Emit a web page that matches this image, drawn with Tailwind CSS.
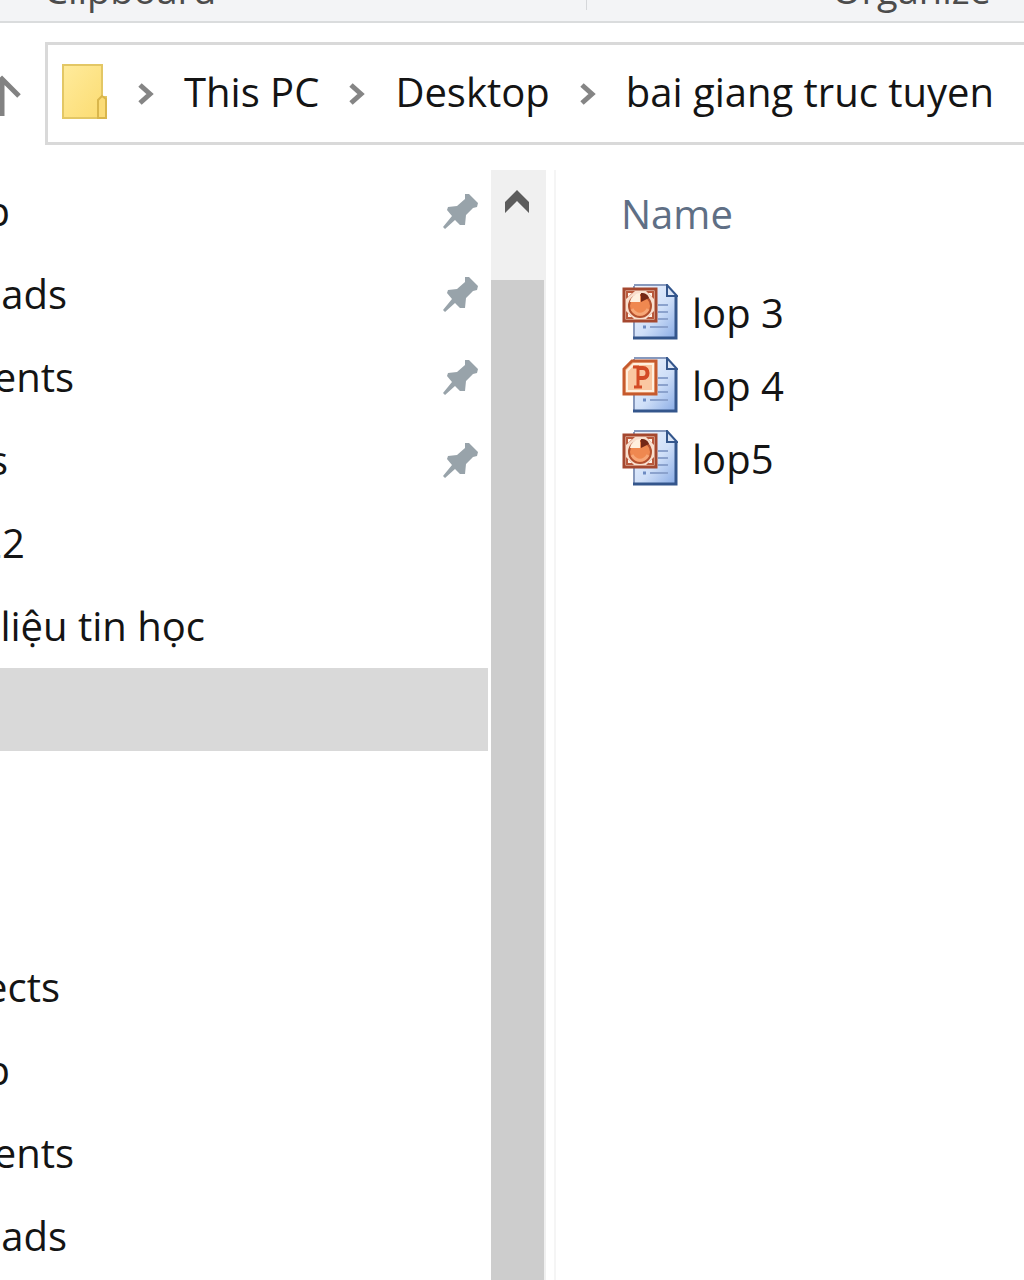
<!DOCTYPE html>
<html lang="en">

<head>
    <meta charset="UTF-8">
    <meta name="viewport" content="width=device-width, initial-scale=1">
    <title>bai giang truc tuyen</title>
    <script src="https://cdn.jsdelivr.net/npm/@tailwindcss/browser@4"></script>
</head>

<body class="bg-white text-[#141414] font-['Open_Sans',sans-serif] text-[40px] leading-[56px] overflow-hidden">
    <!-- Shared icons -->
    <svg class="absolute size-0" aria-hidden="true">
        <defs>
            <linearGradient id="paper" x1="0" y1="0" x2="1" y2="1">
                <stop offset="0" stop-color="#f4f8ff" />
                <stop offset="0.55" stop-color="#cfdff8" />
                <stop offset="1" stop-color="#86a9e4" />
            </linearGradient>
            <linearGradient id="folder" x1="0" y1="0" x2="1" y2="1">
                <stop offset="0" stop-color="#ffeb9c" />
                <stop offset="1" stop-color="#fbdb70" />
            </linearGradient>
        </defs>
        <symbol id="pin" viewBox="0 0 36 36">
            <path d="M22 0h4l9 9-1 4-4 1-7 7-1 10h-5l-5-5-10 9-2-2 9-11-5-6 1-3 9-1 8-7z" fill="#98a3aa" />
        </symbol>
        <symbol id="chevron" viewBox="0 0 18 26">
            <path d="M3 4l10 9-10 9" fill="none" stroke="#858585" stroke-width="5" />
        </symbol>
        <symbol id="page" viewBox="0 0 56 56">
            <path d="M12 1h34l9 10v44H12z" fill="url(#paper)" />
            <path d="M12 55V2M12 1h34" fill="none" stroke="#8799bd" stroke-width="2" />
            <path d="M54 12v42H11" fill="none" stroke="#34568c" stroke-width="3" />
            <path d="M45 1v11h10z" fill="#dce6f6" stroke="#34568c" stroke-width="2" />
            <path d="M36 21h10M36 28h10M36 35h10M28 43h18" stroke="#8ba2cd" stroke-width="2" />
            <path d="M21 43h3" stroke="#6d8bc2" stroke-width="3" />
        </symbol>
        <symbol id="show" viewBox="0 0 56 56">
            <use href="#page" />
            <rect x="2" y="5" width="32" height="32" fill="#f9dfce" stroke="#a5482f" stroke-width="3" />
            <path d="M4 7h9l-9 8zM32 7h-8l8 8zM4 35v-8l8 8zM32 35v-8l-8 8z" fill="#b9593c" />
            <path d="M6 9h4l-4 4zM30 9h-4l4 4zM6 33v-4l4 4zM30 33v-4l-4 4z" fill="#fff3e8" />
            <circle cx="18" cy="22" r="11" fill="#ef8850" stroke="#b4512f" stroke-width="2" />
            <path d="M18 18V9a11 11 0 0 0-10 9z" fill="#fff0df" />
            <path d="M19 18V9c5 0 7 2 8 5z" fill="#742715" />
            <path d="M10 25c4 7 12 7 16 0" fill="none" stroke="#f7a778" stroke-width="3" />
        </symbol>
        <symbol id="deck" viewBox="0 0 56 56">
            <use href="#page" />
            <path d="M2 37V12l8-8h24v33z" fill="#fac8a2" stroke="#c65a2d" stroke-width="3" />
            <path d="M5 34V14l7-7h19v27z" fill="none" stroke="#fff0df" stroke-width="2" />
            <path d="M11 10h6M16 10v20M12 30h8" fill="none" stroke="#d34b25" stroke-width="3" />
            <path d="M16 11h5c6 0 6 10 0 10h-5" fill="none" stroke="#d34b25" stroke-width="4" />
        </symbol>
    </svg>

    <div class="flex flex-col h-screen">
        <!-- Ribbon group labels -->
        <header class="h-[23px] shrink-0 flex items-end bg-[#f3f4f6] border-b-2 border-[#dadcdd] text-[38px] leading-[48px] font-medium text-[#4c4c4c] overflow-hidden">
            <div class="w-[586px] h-full shrink-0 flex items-end pl-[44px] pb-2">
                <span>Clipboard</span>
            </div>
            <div class="flex-1 h-full flex items-end pl-[246px] pb-2 relative">
                <span class="absolute left-0 top-0 w-px h-[10px] bg-[#d5d7da]"></span>
                <span>Organize</span>
            </div>
        </header>

        <!-- Address bar -->
        <div class="flex items-center pt-[19px] pb-[25px] shrink-0">
            <button aria-label="Up" class="w-[45px] shrink-0">
                <svg class="w-[22px] h-11" viewBox="0 0 22 44">
                    <path d="M2 44V6M-16 24L2 7l17 17" fill="none" stroke="#828282" stroke-width="5" />
                </svg>
            </button>
            <nav aria-label="Address" class="flex-1 h-[103px] flex items-center border-3 border-r-0 border-[#d9d9d9] pl-3 pb-1 whitespace-nowrap">
                <svg class="w-12 h-14 shrink-0" viewBox="0 0 48 56">
                    <path d="M3 1h39v32h4v21H3z" fill="url(#folder)" stroke="#e3c765" stroke-width="2" />
                    <path d="M38 54V36l4-4 4 3v19z" fill="#fbdc78" stroke="#d9b64c" stroke-width="2" />
                </svg>
                <svg class="w-[18px] h-[26px] mt-1 mx-[29px] shrink-0"><use href="#chevron" /></svg>
                <a href="#">This PC</a>
                <svg class="w-[18px] h-[26px] mt-1 mx-[29px] shrink-0"><use href="#chevron" /></svg>
                <a href="#">Desktop</a>
                <svg class="w-[18px] h-[26px] mt-1 mx-[29px] shrink-0"><use href="#chevron" /></svg>
                <a href="#">bai giang truc tuyen</a>
            </nav>
        </div>

        <main class="flex flex-1 min-h-0">
            <!-- Navigation pane, scrolled to the right -->
            <nav aria-label="Folders" class="w-[491px] shrink-0 overflow-hidden whitespace-nowrap pr-[3px]">
                <a href="#" class="h-[83px] flex items-center justify-between pr-[9px]">
                    <span class="w-[10px] pb-[2px] flex justify-end">Desktop</span>
                    <svg class="size-9"><use href="#pin" /></svg>
                </a>
                <a href="#" class="h-[83px] flex items-center justify-between pr-[9px]">
                    <span class="w-[67px] pb-[2px] flex justify-end">Downloads</span>
                    <svg class="size-9"><use href="#pin" /></svg>
                </a>
                <a href="#" class="h-[83px] flex items-center justify-between pr-[9px]">
                    <span class="w-[74px] pb-[2px] flex justify-end">Documents</span>
                    <svg class="size-9"><use href="#pin" /></svg>
                </a>
                <a href="#" class="h-[83px] flex items-center justify-between pr-[9px]">
                    <span class="w-[8px] pb-[2px] flex justify-end">Pictures</span>
                    <svg class="size-9"><use href="#pin" /></svg>
                </a>
                <a href="#" class="h-[83px] flex items-center">
                    <span class="w-[25px] pb-[2px] flex justify-end">22</span>
                </a>
                <a href="#" class="h-[83px] flex items-center">
                    <span class="w-[205px] pb-[2px] flex justify-end">liệu tin học</span>
                </a>
                <a href="#" aria-label="Selected folder" class="h-[83px] block bg-[#d9d9d9]"></a>
                <a href="#" class="h-[83px] flex items-center mt-[195px]">
                    <span class="w-[60px] pb-[2px] flex justify-end">Objects</span>
                </a>
                <a href="#" class="h-[83px] flex items-center">
                    <span class="w-[10px] pb-[2px] flex justify-end">Desktop</span>
                </a>
                <a href="#" class="h-[83px] flex items-center">
                    <span class="w-[74px] pb-[2px] flex justify-end">Documents</span>
                </a>
                <a href="#" class="h-[83px] flex items-center">
                    <span class="w-[67px] pb-[2px] flex justify-end">Downloads</span>
                </a>
            </nav>

            <!-- Scrollbar -->
            <div class="w-[55px] shrink-0 flex flex-col bg-[#f0f0f0]">
                <button aria-label="Scroll up" class="h-[110px] flex justify-center pt-5 pr-[3px]">
                    <svg class="w-[26px] h-[24px]" viewBox="0 0 26 24">
                        <path d="M13 0l12 12v11L13 11 1 23V12z" fill="#5c5c5c" />
                    </svg>
                </button>
                <div class="flex-1 bg-[#cdcdcd] mr-[2px]"></div>
            </div>

            <!-- File list -->
            <section class="flex-1 ml-2 border-l-2 border-[#f5f5f5] pl-[65px] pt-4">
                <table class="text-left">
                    <thead>
                        <tr>
                            <th class="font-normal text-[#5f6f85] pb-[33px] p-0">Name</th>
                        </tr>
                    </thead>
                    <tbody>
                        <tr>
                            <td class="h-[73px] p-0">
                                <a href="#" class="flex items-center gap-[14px] pl-px"><svg class="size-14"><use href="#show" /></svg><span class="pt-[2px]">lop 3</span></a>
                            </td>
                        </tr>
                        <tr>
                            <td class="h-[73px] p-0">
                                <a href="#" class="flex items-center gap-[14px] pl-px"><svg class="size-14"><use href="#deck" /></svg><span class="pt-[2px]">lop 4</span></a>
                            </td>
                        </tr>
                        <tr>
                            <td class="h-[73px] p-0">
                                <a href="#" class="flex items-center gap-[14px] pl-px"><svg class="size-14"><use href="#show" /></svg><span class="pt-[2px]">lop5</span></a>
                            </td>
                        </tr>
                    </tbody>
                </table>
            </section>
        </main>
    </div>
</body>

</html>
